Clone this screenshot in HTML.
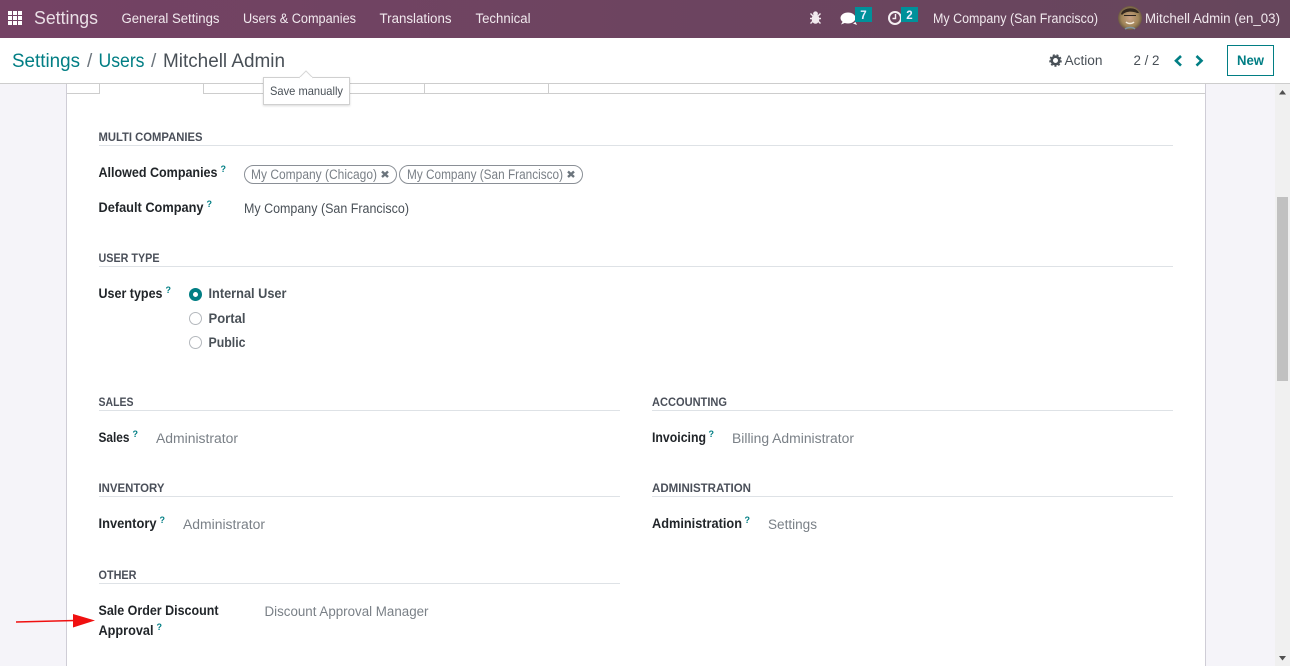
<!DOCTYPE html>
<html lang="en"><head><meta charset="utf-8"><title>Settings</title>
<style>
html,body{margin:0;padding:0;width:1290px;height:666px;overflow:hidden;background:#fff}
svg{display:block}
text{font-family:"Liberation Sans","DejaVu Sans",sans-serif}
.nav{fill:#f1e9ee;font-size:13.500px}
.sec{fill:#4a4f59;font-size:11.500px;font-weight:bold}
.lab{fill:#212529;font-size:13.500px;font-weight:bold}
.val{fill:#7a8087;font-size:13.500px}
.dark{fill:#495057;font-size:13.500px}
.q{fill:#017e84;font-size:9px;font-weight:bold}
</style></head><body>
<svg width="1290" height="666" viewBox="0 0 1290 666" xmlns="http://www.w3.org/2000/svg">
<defs><linearGradient id="g" x1="0" x2="1" y1="0" y2="0"><stop offset="0" stop-color="#744264"/><stop offset="1" stop-color="#66465c"/></linearGradient>
<radialGradient id="av" cx=".5" cy=".5" r=".55"><stop offset="0" stop-color="#c9a184"/><stop offset=".65" stop-color="#a08558"/><stop offset="1" stop-color="#5a4a3a"/></radialGradient>
<filter id="sh" x="-10%" y="-10%" width="120%" height="130%"><feDropShadow dx="0" dy="1" stdDeviation="1" flood-color="#000" flood-opacity=".15"/></filter></defs>

<!-- background -->
<rect x="0" y="84" width="1290" height="582" fill="#f5f4f9"/>
<rect x="66" y="84" width="1140" height="582" fill="#fff"/>
<rect x="66" y="84" width="1" height="582" fill="#cfcdd6"/>
<rect x="1205" y="84" width="1" height="582" fill="#cfcdd6"/>
<rect x="1275" y="84" width="15" height="582" fill="#f0f0f0"/>
<rect x="1277" y="197" width="11" height="184" fill="#c1c1c1"/>
<path d="M1279 94.500h7l-3.500-4.500z" fill="#505050"/>
<path d="M1279 656h7l-3.500 4.500z" fill="#505050"/>

<!-- navbar -->
<rect width="1290" height="38" fill="url(#g)"/>
<g fill="#fff">
<rect x="8" y="11" width="4" height="4"/><rect x="13" y="11" width="4" height="4"/><rect x="18" y="11" width="4" height="4"/>
<rect x="8" y="16" width="4" height="4"/><rect x="13" y="16" width="4" height="4"/><rect x="18" y="16" width="4" height="4"/>
<rect x="8" y="21" width="4" height="4"/><rect x="13" y="21" width="4" height="4"/><rect x="18" y="21" width="4" height="4"/>
</g>
<text x="34" y="24" font-size="18" fill="#eadfe6" textLength="64" lengthAdjust="spacingAndGlyphs">Settings</text>
<text class="nav" x="121.500" y="23" textLength="98" lengthAdjust="spacingAndGlyphs">General Settings</text>
<text class="nav" x="243" y="23" textLength="113" lengthAdjust="spacingAndGlyphs">Users &amp; Companies</text>
<text class="nav" x="379.500" y="23" textLength="72" lengthAdjust="spacingAndGlyphs">Translations</text>
<text class="nav" x="475.500" y="23" textLength="55" lengthAdjust="spacingAndGlyphs">Technical</text>

<!-- bug -->
<g fill="#f1e9ee"><ellipse cx="815.500" cy="19" rx="3.800" ry="4.800"/><circle cx="815.500" cy="13.800" r="2.400"/>
<path d="M810.500 13.500l2.500 2.500M820.500 13.500l-2.500 2.500M810 18.500h3M821 18.500h-3M810.500 23.500l2.500-2.500M820.500 23.500l-2.500-2.500" stroke="#f1e9ee" stroke-width="1.400"/></g>
<!-- chat -->
<ellipse cx="848" cy="18" rx="7.500" ry="5.500" fill="#fff"/><path d="M843 21l-2 3.500 5-2z" fill="#fff"/>
<path d="M853 23.500l4 1.500-1.500-3z" fill="#fff"/>
<rect x="855" y="7" width="17" height="15" fill="#00919a"/>
<text x="863.500" y="19" font-size="11.500" font-weight="bold" fill="#eef" text-anchor="middle">7</text>
<!-- clock -->
<circle cx="895" cy="18" r="6" fill="none" stroke="#f4eef2" stroke-width="2"/>
<path d="M895.500 14v4.500h-3" fill="none" stroke="#f4eef2" stroke-width="1.400"/>
<rect x="901" y="7" width="17" height="15" fill="#00919a"/>
<text x="909.500" y="19" font-size="11.500" font-weight="bold" fill="#eef" text-anchor="middle">2</text>

<text class="nav" x="933" y="23" textLength="165" lengthAdjust="spacingAndGlyphs">My Company (San Francisco)</text>
<circle cx="1130" cy="18" r="12" fill="url(#av)"/>
<path d="M1121 14c2-7 15-8 18-1l-2 0c-5-2-11-2-15 2z" fill="#33281f"/>
<path d="M1124 15.500h12" stroke="#2b2320" stroke-width="1"/>
<path d="M1126 22c2 2 6 2 8 0" stroke="#f4ead9" stroke-width="1.500" fill="none"/>
<path d="M1125 29c3-2 8-2 10 0" stroke="#7f94a0" stroke-width="1.500" fill="none"/>
<text class="nav" x="1145" y="23" textLength="135" lengthAdjust="spacingAndGlyphs">Mitchell Admin (en_03)</text>

<!-- control panel -->
<rect y="38" width="1290" height="46" fill="#fff"/>
<rect y="83" width="1290" height="1" fill="#cdcdcd"/>
<text x="12" y="67" font-size="19" fill="#017e84" textLength="68" lengthAdjust="spacingAndGlyphs">Settings</text>
<text x="87" y="67" font-size="19" fill="#6c757d">/</text>
<text x="98.500" y="67" font-size="19" fill="#017e84" textLength="46" lengthAdjust="spacingAndGlyphs">Users</text>
<text x="151" y="67" font-size="19" fill="#6c757d">/</text>
<text x="163" y="67" font-size="19" fill="#495057" textLength="122" lengthAdjust="spacingAndGlyphs">Mitchell Admin</text>

<!-- action -->
<circle cx="1055.500" cy="60.500" r="3.800" fill="none" stroke="#495057" stroke-width="2.600"/>
<circle cx="1055.500" cy="60.500" r="5.600" fill="none" stroke="#495057" stroke-width="1.400" stroke-dasharray="2 1.900"/>
<text class="dark" x="1064.500" y="65" textLength="38" lengthAdjust="spacingAndGlyphs">Action</text>
<text class="dark" x="1133.500" y="65" textLength="26" lengthAdjust="spacingAndGlyphs">2 / 2</text>
<path d="M1181 56l-5 4.800 5 4.800" fill="none" stroke="#017e84" stroke-width="2.600"/>
<path d="M1196.500 56l5 4.800-5 4.800" fill="none" stroke="#017e84" stroke-width="2.600"/>
<rect x="1227.500" y="45.500" width="46" height="30" fill="#fff" stroke="#017e84"/>
<text x="1237" y="65" font-size="13.500" font-weight="bold" fill="#017e84" textLength="27" lengthAdjust="spacingAndGlyphs">New</text>

<!-- tabs -->
<g fill="#cdcdcd">
<rect x="67" y="93" width="33" height="1"/>
<rect x="99" y="84" width="1" height="10"/>
<rect x="203" y="84" width="1" height="10"/>
<rect x="203" y="93" width="1002" height="1"/>
<rect x="424" y="84" width="1" height="10"/>
<rect x="548" y="84" width="1" height="10"/>
</g>

<!-- tooltip -->
<rect x="263.500" y="77.500" width="86" height="27" fill="#fff" stroke="#d0d0d0" filter="url(#sh)"/>
<path d="M299 78l7-7 7 7" fill="#fff" stroke="#d8d8d8"/>
<rect x="300" y="77" width="12" height="2" fill="#fff"/>
<text x="270" y="95" font-size="12" fill="#495057" textLength="73" lengthAdjust="spacingAndGlyphs">Save manually</text>

<!-- separators -->
<g fill="#dee2e6">
<rect x="99" y="145" width="1074" height="1"/>
<rect x="99" y="266" width="1074" height="1"/>
<rect x="99" y="410" width="521" height="1"/>
<rect x="652" y="410" width="521" height="1"/>
<rect x="99" y="496" width="521" height="1"/>
<rect x="652" y="496" width="521" height="1"/>
<rect x="99" y="583" width="521" height="1"/>
</g>

<text class="sec" x="98.500" y="141" textLength="104" lengthAdjust="spacingAndGlyphs">MULTI COMPANIES</text>
<text class="lab" x="98.500" y="177" textLength="119" lengthAdjust="spacingAndGlyphs">Allowed Companies</text>
<text class="q" x="220.500" y="172">?</text>

<rect x="244.500" y="165.500" width="152" height="18" rx="9" fill="#fff" stroke="#8a8f96"/>
<text class="val" x="251" y="179" textLength="126" lengthAdjust="spacingAndGlyphs">My Company (Chicago)</text>
<path d="M382 171.500l6 5.500M388 171.500l-6 5.500" stroke="#6c757d" stroke-width="2.400"/>
<rect x="399.500" y="165.500" width="183" height="18" rx="9" fill="#fff" stroke="#8a8f96"/>
<text class="val" x="407" y="179" textLength="156" lengthAdjust="spacingAndGlyphs">My Company (San Francisco)</text>
<path d="M568 171.500l6 5.500M574 171.500l-6 5.500" stroke="#6c757d" stroke-width="2.400"/>

<text class="lab" x="98.500" y="212" textLength="105" lengthAdjust="spacingAndGlyphs">Default Company</text>
<text class="q" x="206.500" y="207">?</text>
<text class="dark" x="244" y="213" textLength="165" lengthAdjust="spacingAndGlyphs">My Company (San Francisco)</text>

<text class="sec" x="98.500" y="262" textLength="61" lengthAdjust="spacingAndGlyphs">USER TYPE</text>
<text class="lab" x="98.500" y="298" textLength="64" lengthAdjust="spacingAndGlyphs">User types</text>
<text class="q" x="165.500" y="293">?</text>
<circle cx="195.500" cy="294.500" r="4.500" fill="#fff" stroke="#017e84" stroke-width="4"/>
<circle cx="195.500" cy="318.500" r="6" fill="#fff" stroke="#b4b8bd"/>
<circle cx="195.500" cy="342.500" r="6" fill="#fff" stroke="#b4b8bd"/>
<text x="208.500" y="298" font-size="13.500" font-weight="bold" fill="#495057" textLength="78" lengthAdjust="spacingAndGlyphs">Internal User</text>
<text x="208.500" y="323" font-size="13.500" font-weight="bold" fill="#495057" textLength="37" lengthAdjust="spacingAndGlyphs">Portal</text>
<text x="208.500" y="347" font-size="13.500" font-weight="bold" fill="#495057" textLength="37" lengthAdjust="spacingAndGlyphs">Public</text>

<text class="sec" x="98.500" y="406" textLength="35" lengthAdjust="spacingAndGlyphs">SALES</text>
<text class="lab" x="98.500" y="442" textLength="31" lengthAdjust="spacingAndGlyphs">Sales</text>
<text class="q" x="132.500" y="437">?</text>
<text class="val" x="156" y="443" textLength="82" lengthAdjust="spacingAndGlyphs">Administrator</text>

<text class="sec" x="652" y="406" textLength="75" lengthAdjust="spacingAndGlyphs">ACCOUNTING</text>
<text class="lab" x="652" y="442" textLength="54" lengthAdjust="spacingAndGlyphs">Invoicing</text>
<text class="q" x="708.500" y="437">?</text>
<text class="val" x="732" y="443" textLength="122" lengthAdjust="spacingAndGlyphs">Billing Administrator</text>

<text class="sec" x="98.500" y="492" textLength="66" lengthAdjust="spacingAndGlyphs">INVENTORY</text>
<text class="lab" x="98.500" y="528" textLength="58" lengthAdjust="spacingAndGlyphs">Inventory</text>
<text class="q" x="159.500" y="523">?</text>
<text class="val" x="183" y="529" textLength="82" lengthAdjust="spacingAndGlyphs">Administrator</text>

<text class="sec" x="652" y="492" textLength="99" lengthAdjust="spacingAndGlyphs">ADMINISTRATION</text>
<text class="lab" x="652" y="528" textLength="90" lengthAdjust="spacingAndGlyphs">Administration</text>
<text class="q" x="744.500" y="523">?</text>
<text class="val" x="768" y="529" textLength="49" lengthAdjust="spacingAndGlyphs">Settings</text>

<text class="sec" x="98.500" y="579" textLength="38" lengthAdjust="spacingAndGlyphs">OTHER</text>
<text class="lab" x="98.500" y="615" textLength="120" lengthAdjust="spacingAndGlyphs">Sale Order Discount</text>
<text class="lab" x="98.500" y="635" textLength="55" lengthAdjust="spacingAndGlyphs">Approval</text>
<text class="q" x="156.500" y="630">?</text>
<text class="val" x="264.500" y="616" textLength="164" lengthAdjust="spacingAndGlyphs">Discount Approval Manager</text>

<!-- arrow -->
<path d="M16 622l59-1.500" stroke="#f01010" stroke-width="1.600"/>
<path d="M73 614l22 6.500-22 7z" fill="#f01010"/>
</svg>
</body></html>
